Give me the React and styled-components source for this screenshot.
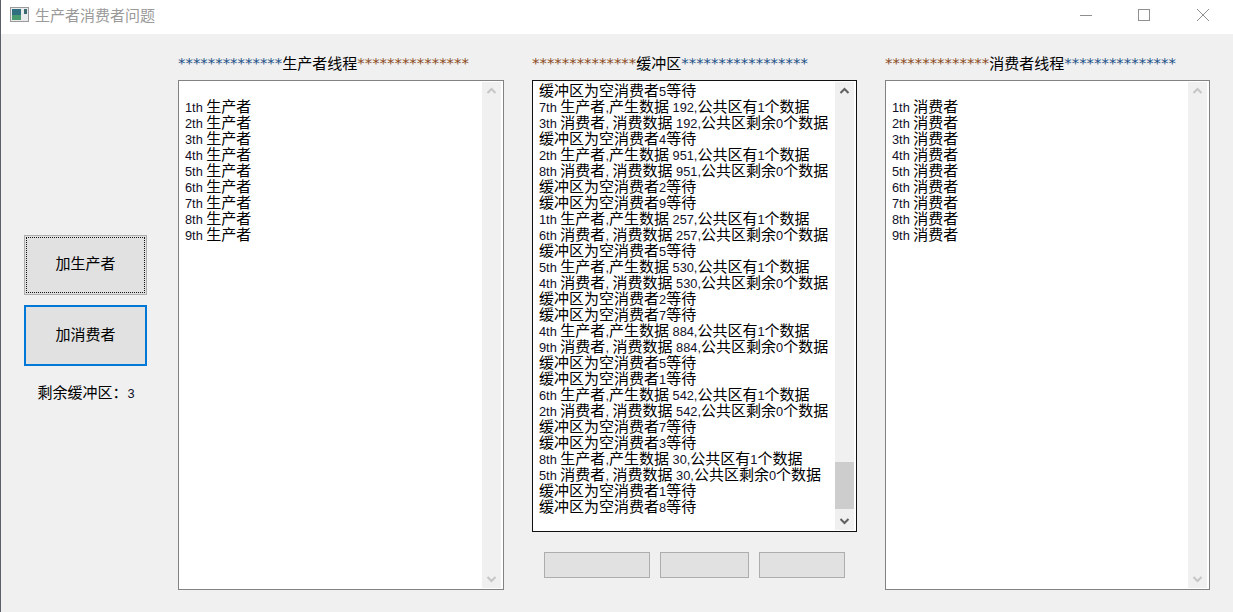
import React from 'react';
import styled, { createGlobalStyle } from 'styled-components';

const Global = createGlobalStyle`
  html, body { margin: 0; padding: 0; background: #f0f0f0; }
  body { font-family: "Noto Sans CJK SC", "Noto Sans", sans-serif; overflow: hidden; }
`;

const Win = styled.div`
  width: 1233px; height: 612px; display: flex; flex-direction: column;
  border-left: 1px solid #5a6068; box-sizing: border-box; overflow: hidden;
`;
const TitleBar = styled.div`
  height: 34px; flex: none; background: #fff; display: flex; align-items: center; padding: 0 1px 0 9px;
`;
const AppIcon = styled.svg`width: 20px; height: 16px; margin-top: -4px; flex: none;`;
const Title = styled.div`
  margin-left: 5px; font-size: 15px; line-height: 16px; color: #9a9a9a; margin-top: -4px; flex: 1;
`;
const Ctrl = styled.div`
  width: 58.5px; height: 28px; margin-top: -5px; display: flex; align-items: center; justify-content: center;
`;
const CtrlIcon = styled.svg`width: 14px; height: 14px; stroke: #8f8f8f; stroke-width: 1; fill: none;`;

const Content = styled.div`flex: 1; display: flex; background: #f0f0f0;`;
const Side = styled.div`
  width: 123px; margin-left: 23px; padding-top: 201px; display: flex; flex-direction: column; flex: none;
`;
const Btn = styled.div`
  height: ${p => p.$focus ? 61 : 60}px; box-sizing: border-box; background: #e1e1e1; position: relative;
  border: ${p => p.$focus ? '2px solid #0078d7' : '1px solid #adadad'};
  display: flex; align-items: center; justify-content: center; padding-bottom: ${p => p.$focus ? 4 : 6}px;
  font-size: 15px; color: #000; margin-bottom: ${p => p.$focus ? 0 : 10}px;
  ${p => p.$dotted && `outline: 1px dotted #111; outline-offset: -3px;`}
`;
const Remain = styled.div`
  margin-top: 17px; padding-left: 1px; text-align: center; font-size: 15px; line-height: 18px; color: #000; white-space: nowrap;
`;
const Col = styled.div`
  width: ${p => p.$w}px; margin-left: ${p => p.$ml}px; flex: none; display: flex; flex-direction: column;
`;
const Head = styled.div`
  height: 46px; flex: none; box-sizing: border-box; padding: 12px 0 0 0; line-height: 18px;
  font-size: 15px; color: #000; white-space: nowrap; display: flex; align-items: center;
`;
const Stars = styled.span`
  font-family: "DejaVu Sans", sans-serif; font-size: 14.9px; color: ${p => p.$c}; line-height: 18px;
`;
const Panel = styled.div`
  height: ${p => p.$h}px; flex: none; box-sizing: border-box; background: #fff;
  border: 1px solid ${p => p.$dark ? '#111' : '#828282'};
  display: flex; overflow: hidden; position: relative;
`;
const TextArea = styled.div`
  flex: 1; padding: 1px 0 0 ${p => p.$pl}px; font-size: 15px; line-height: 16px; color: #000; white-space: pre; overflow: hidden;
`;
const Line = styled.div`height: 16px; overflow: visible;`;
const Latin = styled.span`font-family: "Liberation Sans", sans-serif; font-size: 12.8px; color: #101028;`;

const Bar = styled.div`
  width: 19px; flex: none; margin: 1px 2px 1px 0; background: #f0f0f0; display: flex; flex-direction: column;
  justify-content: space-between; position: relative;
`;
const Arrow = styled.svg`
  width: 19px; height: 17px; display: block; fill: none; stroke: ${p => p.$on ? '#606060' : '#c6c6c6'}; stroke-width: 2;
`;
const Thumb = styled.div`
  position: absolute; left: 0; right: 0; bottom: 21px; height: 47px; background: #cdcdcd;
`;
const Foot = styled.div`display: flex; gap: 10px; padding: 20px 0 0 12px;`;
const FootBtn = styled.div`
  width: ${p => p.$w}px; height: 26px; box-sizing: border-box; background: #e1e1e1; border: 1px solid #adadad;
`;

const Rich = ({ text }) => (
  <Line>
    {text.split(/([\x20-\x7e]+)/).filter(Boolean).map((s, i) =>
      /^[\x20-\x7e]+$/.test(s) ? <Latin key={i}>{s}</Latin> : <span key={i}>{s}</span>
    )}
  </Line>
);

const Scroll = ({ active }) => (
  <Bar>
    <Arrow viewBox="0 0 19 17" $on={active}><path d="M5.5 11 9.5 7l4 4" /></Arrow>
    {active && <Thumb />}
    <Arrow viewBox="0 0 19 17" $on={active}><path d="M5.5 6l4 4 4-4" /></Arrow>
  </Bar>
);

const rows = (w) => ['', ...[1,2,3,4,5,6,7,8,9].map(n => `${n}th ${w}`)];

const log = [
  '缓冲区为空消费者5等待',
  '7th 生产者,产生数据 192,公共区有1个数据',
  '3th 消费者, 消费数据 192,公共区剩余0个数据',
  '缓冲区为空消费者4等待',
  '2th 生产者,产生数据 951,公共区有1个数据',
  '8th 消费者, 消费数据 951,公共区剩余0个数据',
  '缓冲区为空消费者2等待',
  '缓冲区为空消费者9等待',
  '1th 生产者,产生数据 257,公共区有1个数据',
  '6th 消费者, 消费数据 257,公共区剩余0个数据',
  '缓冲区为空消费者5等待',
  '5th 生产者,产生数据 530,公共区有1个数据',
  '4th 消费者, 消费数据 530,公共区剩余0个数据',
  '缓冲区为空消费者2等待',
  '缓冲区为空消费者7等待',
  '4th 生产者,产生数据 884,公共区有1个数据',
  '9th 消费者, 消费数据 884,公共区剩余0个数据',
  '缓冲区为空消费者5等待',
  '缓冲区为空消费者1等待',
  '6th 生产者,产生数据 542,公共区有1个数据',
  '2th 消费者, 消费数据 542,公共区剩余0个数据',
  '缓冲区为空消费者7等待',
  '缓冲区为空消费者3等待',
  '8th 生产者,产生数据 30,公共区有1个数据',
  '5th 消费者, 消费数据 30,公共区剩余0个数据',
  '缓冲区为空消费者1等待',
  '缓冲区为空消费者8等待',
];

const BLUE = '#1c4f86', BROWN = '#8a4a20';

export default function App() {
  return (
    <>
      <Global />
      <Win>
        <TitleBar>
          <AppIcon viewBox="0 0 20 16">
            <rect x="0.5" y="0.5" width="18" height="14" fill="#e8ecec" stroke="#9a9a9a" />
            <rect x="2" y="2" width="9" height="11" fill="#2f6f80" />
            <rect x="2" y="8" width="9" height="5" fill="#4a9a70" />
            <rect x="14" y="2" width="3" height="5" fill="#3a6a70" />
          </AppIcon>
          <Title>生产者消费者问题</Title>
          <Ctrl><CtrlIcon viewBox="0 0 14 14"><path d="M1 7.5h12" /></CtrlIcon></Ctrl>
          <Ctrl><CtrlIcon viewBox="0 0 14 14"><rect x="1.5" y="1.5" width="11" height="11" /></CtrlIcon></Ctrl>
          <Ctrl><CtrlIcon viewBox="0 0 14 14"><path d="M1 1l12 12M13 1 1 13" /></CtrlIcon></Ctrl>
        </TitleBar>
        <Content>
          <Side>
            <Btn $dotted>加生产者</Btn>
            <Btn $focus>加消费者</Btn>
            <Remain>剩余缓冲区：<Latin>3</Latin></Remain>
          </Side>
          <Col $w={326} $ml={31}>
            <Head>
              <Stars $c={BLUE}>**************</Stars>生产者线程<Stars $c={BROWN}>***************</Stars>
            </Head>
            <Panel $h={510}>
              <TextArea $pl={6}>{rows('生产者').map((t, i) => <Rich key={i} text={t} />)}</TextArea>
              <Scroll />
            </Panel>
          </Col>
          <Col $w={325} $ml={28}>
            <Head>
              <Stars $c={BROWN}>**************</Stars>缓冲区<Stars $c={BLUE}>*****************</Stars>
            </Head>
            <Panel $h={452} $dark>
              <TextArea $pl={6}>{log.map((t, i) => <Rich key={i} text={t} />)}</TextArea>
              <Scroll active />
            </Panel>
            <Foot>
              <FootBtn $w={106} />
              <FootBtn $w={89} />
              <FootBtn $w={86} />
            </Foot>
          </Col>
          <Col $w={325} $ml={28}>
            <Head>
              <Stars $c={BROWN}>**************</Stars>消费者线程<Stars $c={BLUE}>***************</Stars>
            </Head>
            <Panel $h={510}>
              <TextArea $pl={6}>{rows('消费者').map((t, i) => <Rich key={i} text={t} />)}</TextArea>
              <Scroll />
            </Panel>
          </Col>
        </Content>
      </Win>
    </>
  );
}
